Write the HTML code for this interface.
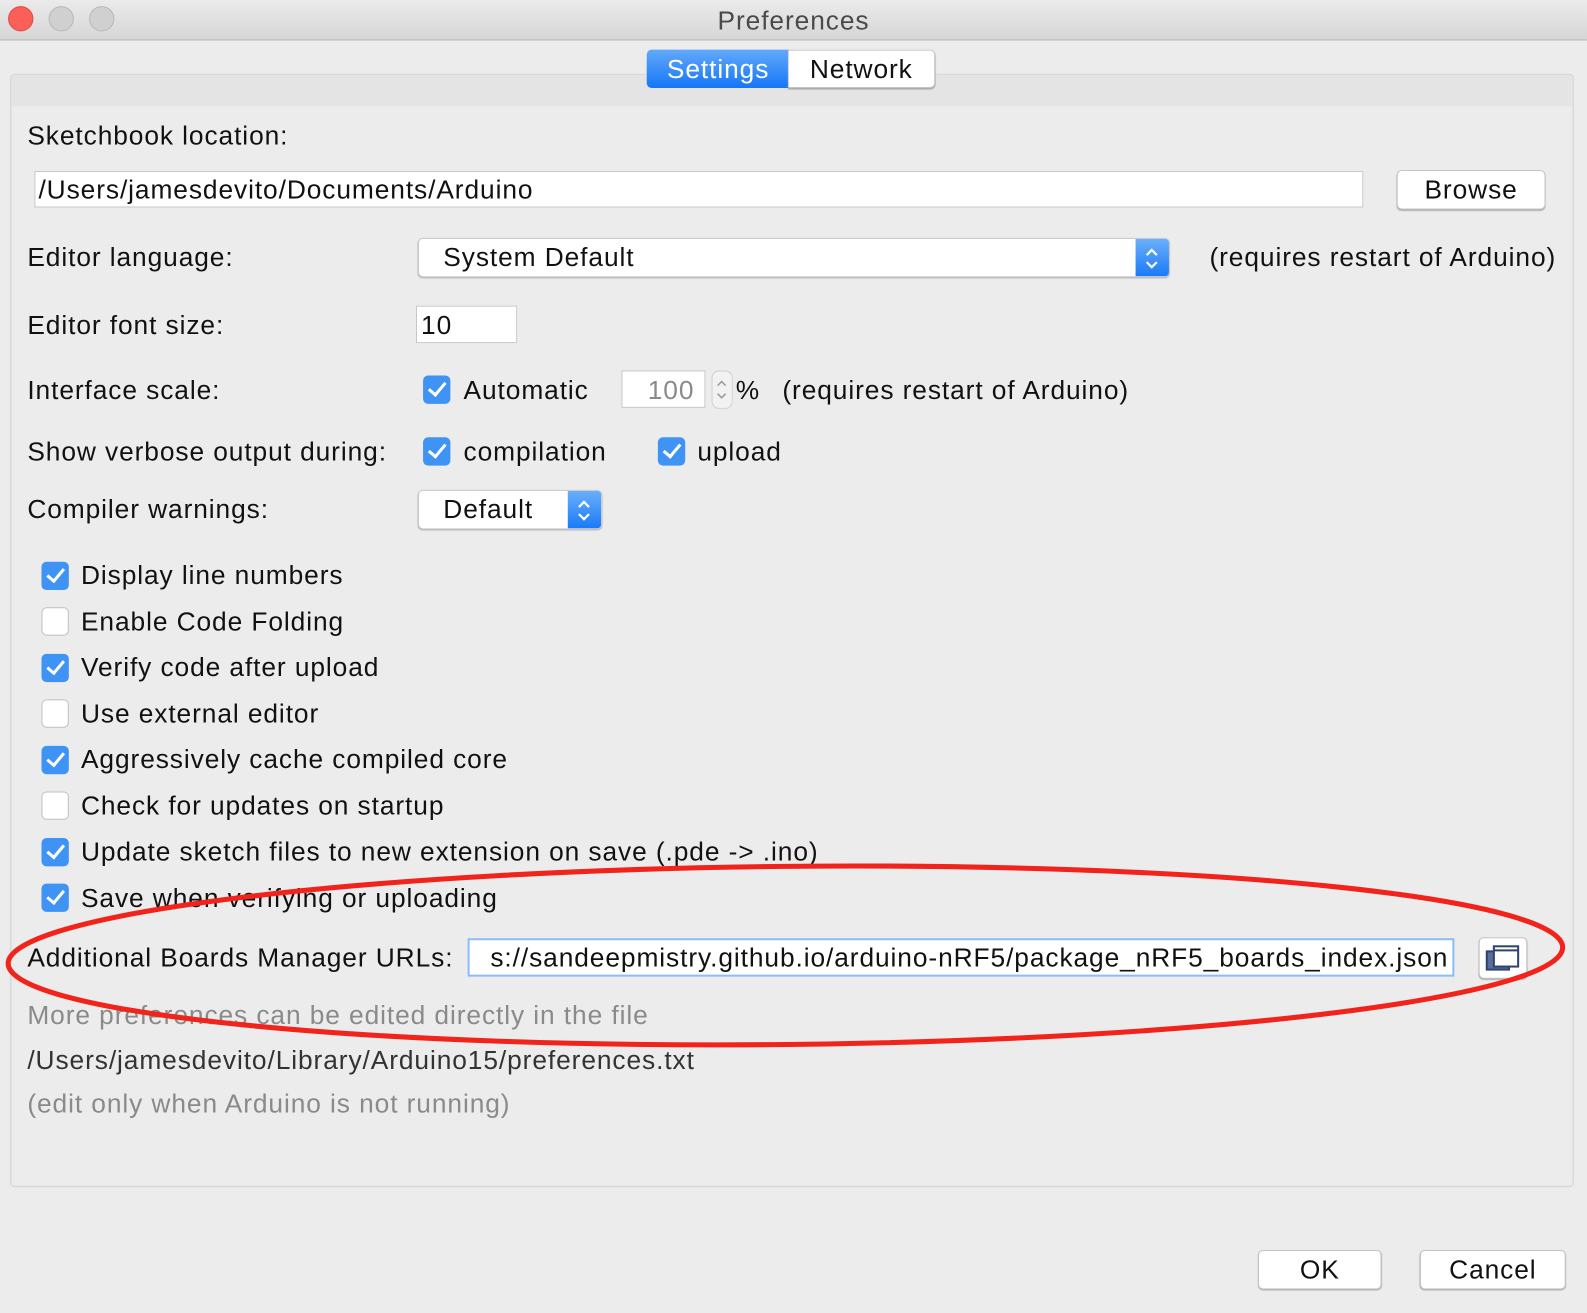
<!DOCTYPE html>
<html><head><meta charset="utf-8"><style>
*{box-sizing:border-box;margin:0;padding:0}
html,body{width:1587px;height:1313px;overflow:hidden;background:#ececec}
#w{position:absolute;left:0;top:0;width:1568px;height:1297px;transform:scale(1.0121);transform-origin:0 0;font-family:"Liberation Sans",sans-serif;font-size:26px;color:#111;letter-spacing:0.9px}
.a{position:absolute}
.t{position:absolute;line-height:30px;white-space:nowrap}
.fld{position:absolute;background:#fff;border:1px solid #c8c8c8}
.btn{position:absolute;background:#fff;border:1px solid #c4c4c4;border-radius:5px;box-shadow:0 1px 1px #b0b0b0;text-align:center}
.cb{position:absolute;width:27px;height:28px;border-radius:5px;background:#3f93f5}
.cb::after{content:"";position:absolute;left:9px;top:3px;width:7px;height:14px;border:solid #fff;border-width:0 3px 3px 0;transform:rotate(40deg)}
.cu{position:absolute;width:27px;height:28px;border-radius:5px;background:#fff;border:1px solid #c0c0c0}
.combo{position:absolute;background:#fff;border:1px solid #c8c8c8;border-radius:5px;box-shadow:0 1px 1px #bbb;overflow:hidden}
.combo .bl{position:absolute;right:0;top:0;bottom:0;width:33px;background:linear-gradient(#6ab0fb,#1a7af7)}
.combo svg{position:absolute;right:0;top:0}
.g{color:#8a8a8a}
</style></head><body><div id="w">
<div class="a" style="left:0;top:0;width:1568px;height:40px;background:linear-gradient(#ebebeb,#d6d6d6);border-bottom:1px solid #b5b5b5"></div>
<div class="a" style="left:8px;top:6px;width:25px;height:25px;border-radius:50%;background:#fc5f57;border:1px solid #de4a42"></div>
<div class="a" style="left:48px;top:6px;width:25px;height:25px;border-radius:50%;background:#d0d0d0;border:1px solid #b8b8b8"></div>
<div class="a" style="left:88px;top:6px;width:25px;height:25px;border-radius:50%;background:#d0d0d0;border:1px solid #b8b8b8"></div>
<div class="t" style="left:0;width:1568px;text-align:center;top:5px;color:#4a4a4a">Preferences</div>

<div class="a" style="left:10px;top:73px;width:1545px;height:1100px;background:#e4e4e4;border:1px solid #d6d6d6;border-radius:4px"></div>
<div class="a" style="left:12px;top:105px;width:1541px;height:1066px;background:#ececec"></div>
<div class="a" style="left:639px;top:49px;width:141px;height:38px;background:linear-gradient(#62a9fb,#1676f6);border-radius:5px 0 0 5px;color:#fff;text-align:center;line-height:38px">Settings</div>
<div class="a" style="left:779px;top:49px;width:145px;height:38px;background:#fff;border:1px solid #c4c4c4;border-left:none;border-radius:0 5px 5px 0;box-shadow:0 1px 1px #aaa;text-align:center;line-height:36px">Network</div>

<div class="t" style="left:27px;top:119px">Sketchbook location:</div>
<div class="fld" style="left:34px;top:169px;width:1313px;height:36px"></div>
<div class="t" style="left:38px;top:172px">/Users/jamesdevito/Documents/Arduino</div>
<div class="btn" style="left:1380px;top:168px;width:147px;height:39px;line-height:37px">Browse</div>

<div class="t" style="left:27px;top:239px">Editor language:</div>
<div class="combo" style="left:413px;top:235px;width:743px;height:39px"><div class="bl"></div><svg width="33" height="39"><path d="M11 16l5-5 5 5M11 23l5 5 5-5" fill="none" stroke="#fff" stroke-width="2.2"/></svg></div>
<div class="t" style="left:438px;top:239px">System Default</div>
<div class="t" style="left:1195px;top:239px">(requires restart of Arduino)</div>

<div class="t" style="left:27px;top:306px">Editor font size:</div>
<div class="fld" style="left:411px;top:302px;width:100px;height:37px"></div>
<div class="t" style="left:416px;top:306px">10</div>

<div class="t" style="left:27px;top:370px">Interface scale:</div>
<div class="cb" style="left:418px;top:371px"></div>
<div class="t" style="left:458px;top:370px">Automatic</div>
<div class="fld" style="left:614px;top:366px;width:83px;height:37px"></div>
<div class="t g" style="left:640px;top:370px">100</div>
<svg class="a" style="left:703px;top:366px" width="21" height="38"><rect x="0.5" y="0.5" width="20" height="37" rx="7" fill="#f2f2f2" stroke="#d0d0d0"/><path d="M6 15l4-4 4 4M6 23l4 4 4-4" fill="none" stroke="#999" stroke-width="1.5"/></svg>
<div class="t" style="left:727px;top:370px">%</div>
<div class="t" style="left:773px;top:370px">(requires restart of Arduino)</div>

<div class="t" style="left:27px;top:431px">Show verbose output during:</div>
<div class="cb" style="left:418px;top:432px"></div>
<div class="t" style="left:458px;top:431px">compilation</div>
<div class="cb" style="left:650px;top:432px"></div>
<div class="t" style="left:689px;top:431px">upload</div>

<div class="t" style="left:27px;top:488px">Compiler warnings:</div>
<div class="combo" style="left:413px;top:484px;width:182px;height:39px"><div class="bl"></div><svg width="33" height="39"><path d="M11 16l5-5 5 5M11 23l5 5 5-5" fill="none" stroke="#fff" stroke-width="2.2"/></svg></div>
<div class="t" style="left:438px;top:488px">Default</div>

<div class="cb" style="left:41px;top:555px"></div><div class="t" style="left:80px;top:553px">Display line numbers</div>
<div class="cu" style="left:41px;top:600px"></div><div class="t" style="left:80px;top:599px">Enable Code Folding</div>
<div class="cb" style="left:41px;top:646px"></div><div class="t" style="left:80px;top:644px">Verify code after upload</div>
<div class="cu" style="left:41px;top:691px"></div><div class="t" style="left:80px;top:690px">Use external editor</div>
<div class="cb" style="left:41px;top:737px"></div><div class="t" style="left:80px;top:735px">Aggressively cache compiled core</div>
<div class="cu" style="left:41px;top:782px"></div><div class="t" style="left:80px;top:781px">Check for updates on startup</div>
<div class="cb" style="left:41px;top:828px"></div><div class="t" style="left:80px;top:826px">Update sketch files to new extension on save (.pde -&gt; .ino)</div>
<div class="cb" style="left:41px;top:873px"></div><div class="t" style="left:80px;top:872px">Save when verifying or uploading</div>

<div class="t" style="left:27px;top:931px">Additional Boards Manager URLs:</div>
<div class="fld" style="left:462px;top:927px;width:975px;height:38px;border:2px solid #8cbcf5;overflow:hidden"><div class="t" style="right:4px;top:2px">s://sandeepmistry.github.io/arduino-nRF5/package_nRF5_boards_index.json</div></div>
<div class="btn" style="left:1461px;top:926px;width:48px;height:41px"></div>
<svg class="a" style="left:1461px;top:926px" width="48" height="41"><rect x="8" y="14" width="22" height="18" fill="#5a6e9c" stroke="#2e4372" stroke-width="2"/><rect x="15" y="9" width="24" height="20" fill="#fff" stroke="#2e4372" stroke-width="2"/><line x1="15" y1="13" x2="39" y2="13" stroke="#2e4372" stroke-width="2"/></svg>

<div class="t g" style="left:27px;top:988px">More preferences can be edited directly in the file</div>
<div class="t" style="left:27px;top:1032px;color:#333">/Users/jamesdevito/Library/Arduino15/preferences.txt</div>
<div class="t g" style="left:27px;top:1075px">(edit only when Arduino is not running)</div>

<div class="btn" style="left:1243px;top:1235px;width:122px;height:39px;line-height:37px">OK</div>
<div class="btn" style="left:1403px;top:1235px;width:144px;height:39px;line-height:37px">Cancel</div>

<svg class="a" style="left:0;top:840px" width="1568" height="210"><ellipse cx="776" cy="104" rx="768" ry="88" fill="none" stroke="#f1231b" stroke-width="5" transform="rotate(-0.6 776 104)"/></svg>
</div></body></html>
